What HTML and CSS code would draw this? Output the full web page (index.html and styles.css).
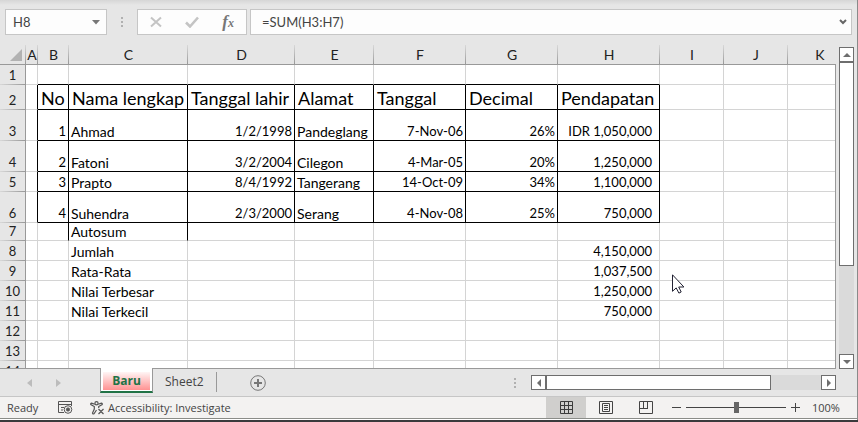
FILE: index.html
```
<!DOCTYPE html>
<html lang="en">

<head>
    <meta charset="UTF-8">
    <meta name="viewport" content="width=device-width, initial-scale=1.0">
    <title>Baru - Spreadsheet</title>
    <link rel="stylesheet" href="styles.css">
</head>

<body>
    <div class="window">
        <header class="formula-bar">
            <div class="name-box">
                <input type="text" value="H8" aria-label="Name box">
                <button type="button" aria-label="Show names">
                    <svg width="8" height="5" viewBox="0 0 8 5"><path d="M0 0h8L4 4.500z" fill="#777"/></svg>
                </button>
            </div>
            <svg class="dots" width="3" height="11" viewBox="0 0 3 11"><path d="M0 0h2v2H0zM0 4h2v2H0zM0 8h2v2H0z" fill="#b0b0b0"/></svg>
            <div class="formula-buttons">
                <button type="button" aria-label="Cancel">
                    <svg width="12" height="12" viewBox="0 0 12 12"><path d="M1 1.500l10 9M11 1.500l-10 9" stroke="#c4c4c4" stroke-width="2" fill="none"/></svg>
                </button>
                <button type="button" aria-label="Enter">
                    <svg width="14" height="12" viewBox="0 0 14 12"><path d="M1 6.500l4 4L13 1.500" stroke="#c4c4c4" stroke-width="2.600" fill="none"/></svg>
                </button>
                <button type="button" aria-label="Insert function" class="fx"><i>f</i><sub>x</sub></button>
            </div>
            <div class="formula-input">
                <input type="text" value="=SUM(H3:H7)" aria-label="Formula">
                <button type="button" aria-label="Expand formula bar">
                    <svg width="8" height="6" viewBox="0 0 8 6"><path d="M1 1l3 3 3-3" stroke="#666" stroke-width="2" fill="none"/></svg>
                </button>
            </div>
        </header>

        <main class="sheet-area">
            <div class="sheet">
                <table>
                    <colgroup>
                        <col class="w-head"><col class="w-a"><col class="w-b"><col class="w-c"><col class="w-d"><col class="w-e">
                        <col class="w-f"><col class="w-f"><col class="w-h"><col class="w-i"><col class="w-i"><col class="w-i">
                    </colgroup>
                    <thead>
                        <tr>
                            <th class="corner"><svg width="12" height="12" viewBox="0 0 12 12"><path d="M12 0v12H0z" fill="#b2b2b2"/></svg></th>
                            <th>A</th><th>B</th><th>C</th><th>D</th><th>E</th><th>F</th><th>G</th><th>H</th><th>I</th><th>J</th><th>K</th>
                        </tr>
                    </thead>
                    <tbody>
                        <tr class="above"><th>1</th><td></td><td></td><td></td><td></td><td></td><td></td><td></td><td></td><td></td><td></td><td></td></tr>
                        <tr class="boxed titles"><th>2</th><td></td><td>No</td><td>Nama lengkap</td><td>Tanggal lahir</td><td>Alamat</td><td>Tanggal</td><td>Decimal</td><td>Pendapatan</td><td></td><td></td><td></td></tr>
                        <tr class="boxed tall"><th>3</th><td></td><td class="num">1</td><td>Ahmad</td><td class="num">1/2/1998</td><td>Pandeglang</td><td class="num">7-Nov-06</td><td class="num">26%</td><td class="money">IDR 1,050,000</td><td></td><td></td><td></td></tr>
                        <tr class="boxed tall"><th>4</th><td></td><td class="num">2</td><td>Fatoni</td><td class="num">3/2/2004</td><td>Cilegon</td><td class="num">4-Mar-05</td><td class="num">20%</td><td class="money">1,250,000</td><td></td><td></td><td></td></tr>
                        <tr class="boxed"><th>5</th><td></td><td class="num">3</td><td>Prapto</td><td class="num">8/4/1992</td><td>Tangerang</td><td class="num">14-Oct-09</td><td class="num">34%</td><td class="money">1,100,000</td><td></td><td></td><td></td></tr>
                        <tr class="boxed tall"><th>6</th><td></td><td class="num">4</td><td>Suhendra</td><td class="num">2/3/2000</td><td>Serang</td><td class="num">4-Nov-08</td><td class="num">25%</td><td class="money">750,000</td><td></td><td></td><td></td></tr>
                        <tr class="short"><th>7</th><td></td><td class="edge"></td><td class="edge">Autosum</td><td></td><td></td><td></td><td></td><td></td><td></td><td></td><td></td></tr>
                        <tr><th>8</th><td></td><td></td><td>Jumlah</td><td></td><td></td><td></td><td></td><td class="money">4,150,000</td><td></td><td></td><td></td></tr>
                        <tr><th>9</th><td></td><td></td><td>Rata-Rata</td><td></td><td></td><td></td><td></td><td class="money">1,037,500</td><td></td><td></td><td></td></tr>
                        <tr><th>10</th><td></td><td></td><td>Nilai Terbesar</td><td></td><td></td><td></td><td></td><td class="money">1,250,000</td><td></td><td></td><td></td></tr>
                        <tr><th>11</th><td></td><td></td><td>Nilai Terkecil</td><td></td><td></td><td></td><td></td><td class="money">750,000</td><td></td><td></td><td></td></tr>
                        <tr><th>12</th><td></td><td></td><td></td><td></td><td></td><td></td><td></td><td></td><td></td><td></td><td></td></tr>
                        <tr><th>13</th><td></td><td></td><td></td><td></td><td></td><td></td><td></td><td></td><td></td><td></td><td></td></tr>
                        <tr><th>14</th><td></td><td></td><td></td><td></td><td></td><td></td><td></td><td></td><td></td><td></td><td></td></tr>
                    </tbody>
                </table>
            </div>
            <div class="v-scroll">
                <button type="button" aria-label="Scroll up"><svg width="8" height="4" viewBox="0 0 8 4"><path d="M0 4l4-4 4 4z" fill="#6e6e6e"/></svg></button>
                <div class="thumb"></div>
                <button type="button" class="last" aria-label="Scroll down"><svg width="8" height="4" viewBox="0 0 8 4"><path d="M0 0l4 4 4-4z" fill="#6e6e6e"/></svg></button>
            </div>
        </main>

        <nav class="tab-bar">
            <div class="tab-arrows">
                <button type="button" aria-label="Previous sheet"><svg width="5" height="8" viewBox="0 0 5 8"><path d="M5 0v8L0 4z" fill="#bcbcbc"/></svg></button>
                <button type="button" aria-label="Next sheet"><svg width="5" height="8" viewBox="0 0 5 8"><path d="M0 0v8l5-4z" fill="#bcbcbc"/></svg></button>
            </div>
            <button type="button" class="tab active"><span>Baru</span></button>
            <button type="button" class="tab">Sheet2</button>
            <button type="button" class="add-sheet" aria-label="New sheet">
                <svg width="16" height="16" viewBox="0 0 16 16" fill="none" stroke="#777"><circle cx="8" cy="8" r="7.300"/><path d="M4 8h8M8 4v8" stroke-width="2"/></svg>
            </button>
            <svg class="dots" width="2" height="10" viewBox="0 0 2 10"><path d="M0 0h2v2H0zM0 4h2v2H0zM0 8h2v2H0z" fill="#b0b0b0"/></svg>
            <div class="h-scroll">
                <button type="button" aria-label="Scroll left"><svg width="4" height="8" viewBox="0 0 4 8"><path d="M4 0v8L0 4z" fill="#6e6e6e"/></svg></button>
                <div class="thumb"></div>
                <button type="button" class="last" aria-label="Scroll right"><svg width="4" height="8" viewBox="0 0 4 8"><path d="M0 0v8l4-4z" fill="#6e6e6e"/></svg></button>
            </div>
        </nav>

        <footer class="status-bar">
            <span class="ready">Ready</span>
            <button type="button" class="macro" aria-label="Record macro">
                <svg width="15" height="13" viewBox="0 0 15 13" fill="none" stroke="#555"><path d="M13.500 5V.500H.500v11H6M.500 3.500h13M3 6.500h3M3 9h2"/><circle cx="10" cy="8.500" r="3.800"/><circle cx="10" cy="8.500" r="1.600" fill="#555"/></svg>
            </button>
            <button type="button" class="access">
                <svg width="15" height="14" viewBox="0 0 15 14" fill="none" stroke="#555" stroke-width="1.200"><circle cx="6.500" cy="2.200" r="1.600"/><path d="M4.800 3.300L1.600 2.200Q.400 2.300.800 3.500L4.300 5.500V8L2.500 12q.300 1.400 1.500.800L6.500 9M8.200 3.300l3.200-1.100q1.200.100.800 1.300L8.700 5.500V7M8.500 8l5 5M13.500 8l-5 5"/></svg>
                Accessibility: Investigate
            </button>
            <div class="views">
                <button type="button" class="selected" aria-label="Normal view">
                    <svg width="13" height="13" viewBox="0 0 13 13" fill="none" stroke="#3c3c3c"><path d="M.500.500h12v12H.500zM4.500 0v13M8.500 0v13M0 4.500h13M0 8.500h13"/></svg>
                </button>
                <button type="button" aria-label="Page layout">
                    <svg width="14" height="13" viewBox="0 0 14 13" fill="none" stroke="#444"><path d="M.500.500h13v12H.500zM3.500 2.500h7v8h-7zM5 4.500h4M5 6.500h4M5 8.500h4"/></svg>
                </button>
                <button type="button" aria-label="Page break preview">
                    <svg width="14" height="13" viewBox="0 0 14 13" fill="none" stroke="#444"><path d="M.500.500h13v12H.500zM4.500 0v7M8.500 0v7.500M0 7.500h9"/></svg>
                </button>
            </div>
            <div class="zoom">
                <button type="button" aria-label="Zoom out"><svg width="9" height="9" viewBox="0 0 9 9"><path d="M0 4.500h9" stroke="#444"/></svg></button>
                <input type="range" min="0" max="200" value="100" aria-label="Zoom">
                <button type="button" aria-label="Zoom in"><svg width="9" height="9" viewBox="0 0 9 9"><path d="M0 4.500h9M4.500 0v9" stroke="#444"/></svg></button>
                <span class="percent">100%</span>
            </div>
        </footer>

        <svg class="pointer" width="13" height="20" viewBox="0 0 13 20"><path d="M.500.800v16.500l3.700-3.400 2.700 5.200 2.300-1.100-2.500-5h5.200z" fill="#fff" stroke="#223"/></svg>
    </div>
</body>

</html>
```
FILE: styles.css
```
* {
    margin: 0;
    padding: 0;
    box-sizing: border-box;
}

body {
    font-family: Lato, sans-serif;
    font-size: 13px;
    color: #000;
    background-color: #3a3a3c;
}

button {
    display: flex;
    align-items: center;
    justify-content: center;
    border: none;
    background: none;
    font-family: inherit;
    color: inherit;
}

input {
    border: none;
    background: none;
    outline: none;
    min-width: 0;
    font-family: inherit;
    color: inherit;
}

svg {
    display: block;
    flex: none;
}

.window {
    position: relative;
    display: flex;
    flex-direction: column;
    height: calc(100vh - 2px);
    background-color: #e6e6e6;
    border-right: 1px solid #8a8a8a;
}

/* Formula bar */
.formula-bar {
    display: flex;
    align-items: center;
    height: 45px;
    padding: 9px 5px 10px;
    background-image: linear-gradient(#d6d6d6, #e6e6e6 5px);
    color: #444;
}

.name-box,
.formula-buttons,
.formula-input {
    display: flex;
    align-items: center;
    height: 26px;
    background-color: #fdfdfd;
    border: 1px solid #c6c6c6;
}

.name-box {
    width: 102px;
    padding: 0 6px 0 7px;
}

.name-box input,
.formula-input input {
    flex: 1;
    font-size: 13px;
}

.formula-bar .dots {
    margin: 0 13px 0 14px;
}

.formula-buttons {
    width: 110px;
    justify-content: space-between;
    padding: 0 12px;
    margin-right: 3px;
}

.fx {
    font-family: "Liberation Serif", serif;
    font-size: 17px;
    font-weight: bold;
    color: #777;
}

.fx sub {
    font-size: 12px;
    font-style: italic;
    padding-top: 3px;
}

.formula-input {
    flex: 1;
    padding: 0 4px 0 11px;
}

/* Grid */
.sheet-area {
    display: flex;
    flex: 1;
    min-height: 0;
}

.sheet {
    flex: 1;
    min-width: 0;
    overflow: hidden;
    border-bottom: 1px solid #999;
    background-image: linear-gradient(#e6e6e6 19px, #999 19px, #999 20px, #fff 20px);
    position: relative;
}

.sheet::after {
    content: "";
    position: absolute;
    top: 19px;
    right: 0;
    bottom: 0;
    width: 1px;
    background-color: #999;
}

table {
    table-layout: fixed;
    width: 852px;
    border-spacing: 0;
}

.w-head { width: 26px; }
.w-a { width: 12px; }
.w-b { width: 31px; }
.w-c { width: 119px; }
.w-d { width: 107px; }
.w-e { width: 79px; }
.w-f { width: 92px; }
.w-h { width: 102px; }
.w-i { width: 64px; }

tr {
    height: 20px;
}

th {
    font-size: 14px;
    font-weight: normal;
    line-height: 17px;
    vertical-align: bottom;
    color: #222;
    background-color: #e6e6e6;
}

thead th {
    padding-bottom: 1px;
    border-bottom: 1px solid #999;
    background-image: linear-gradient(#d8d8d8, #999);
    background-size: 1px 100%;
    background-position: right;
    background-repeat: no-repeat;
}

.corner svg {
    margin: 0 0 2px 10px;
}

tbody th {
    border-right: 1px solid #999;
    padding-bottom: 1px;
    font-size: 13px;
    background-image: linear-gradient(to right, #d8d8d8, #999);
    background-size: 100% 1px;
    background-position: bottom;
    background-repeat: no-repeat;
}

td {
    border-right: 1px solid #d4d4d4;
    border-bottom: 1px solid #d4d4d4;
    padding: 0 2px;
    font-size: 14px;
    line-height: 17px;
    vertical-align: bottom;
    white-space: nowrap;
}

.titles {
    height: 25px;
}

.titles td {
    padding-left: 3px;
    font-size: 18px;
    line-height: 22px;
}

.tall {
    height: 31px;
}

.short {
    height: 18px;
}

.num,
.money {
    font-size: 13px;
    text-align: right;
}

.money {
    padding-right: 7px;
}

/* Black box round B2:H6 */
.boxed td:nth-child(-n+9),
.edge {
    border-right-color: #000;
}

.above td:nth-child(n+3):nth-child(-n+9),
.boxed td:nth-child(n+3):nth-child(-n+9) {
    border-bottom-color: #000;
}

/* Scroll bars */
.v-scroll {
    display: flex;
    flex-direction: column;
    width: 15px;
    margin: 2px 3px 0;
    background-color: #dadada;
}

.v-scroll button,
.h-scroll button {
    flex: none;
    width: 15px;
    height: 15px;
    background-color: #fff;
    border: 1px solid #6e6e6e;
}

.thumb {
    background-color: #fff;
    border: 1px solid #6e6e6e;
}

.v-scroll .thumb {
    flex: 0 1 204px;
}

.v-scroll .last {
    margin-top: auto;
}

.h-scroll {
    display: flex;
    width: 305px;
    height: 15px;
    background-color: #dadada;
}

.h-scroll .thumb {
    flex: 0 1 225px;
}

.h-scroll .last {
    margin-left: auto;
}

/* Sheet tabs */
.tab-bar {
    display: flex;
    align-items: center;
    height: 28px;
    padding-right: 21px;
    border-bottom: 1px solid #c6c6c6;
    font-family: "Open Sans", sans-serif;
    color: #444;
}

.tab-arrows {
    display: flex;
    justify-content: space-between;
    width: 100px;
    padding: 0 39px 0 27px;
}

.tab {
    align-self: flex-start;
    height: 20px;
    margin-top: 3px;
    padding: 0 12px 2px;
    font-size: 12px;
    border-right: 1px solid #999;
}

.tab.active {
    height: 25px;
    margin-top: -1px;
    padding: 4px 2px 1px;
    background-color: #fff;
    border-left: 1px solid #999;
    border-bottom: 2px solid #217346;
    font-weight: bold;
    color: #217346;
    position: relative;
}

.tab.active span {
    width: 47px;
    line-height: 18px;
    background-image: linear-gradient(#fff5f5, #ff9292);
}

.add-sheet {
    margin-left: 33px;
    margin-right: auto;
}

.tab-bar .dots {
    margin-right: 15px;
}

/* Status bar */
.status-bar {
    display: flex;
    align-items: center;
    height: 23px;
    padding: 0 0 1px 7px;
    background-color: #f3f2f1;
    border-bottom: 1px solid #fff;
    box-shadow: inset 0 -1px #8a8c88;
    font-family: "Open Sans", sans-serif;
    font-size: 11px;
    line-height: 13px;
    color: #444;
}

.ready {
    width: 51px;
}

.access {
    gap: 3px;
    margin-left: 17px;
    font-size: 11px;
    line-height: 13px;
}

.views {
    display: flex;
    align-self: stretch;
    margin: 0 6px 0 auto;
}

.views button {
    width: 40px;
}

.views .selected {
    background-color: #d0cfcd;
}

.zoom {
    display: flex;
    align-items: center;
    gap: 5px;
}

.zoom input {
    appearance: none;
    width: 100px;
    height: 11px;
    background: linear-gradient(#444, #444) center / 100% 1px no-repeat;
}

.zoom input::-webkit-slider-thumb {
    appearance: none;
    width: 5px;
    height: 11px;
    background-color: #666;
}

.percent {
    width: 45px;
    margin-left: 7px;
}

.pointer {
    position: absolute;
    left: 672px;
    top: 274px;
}
```
